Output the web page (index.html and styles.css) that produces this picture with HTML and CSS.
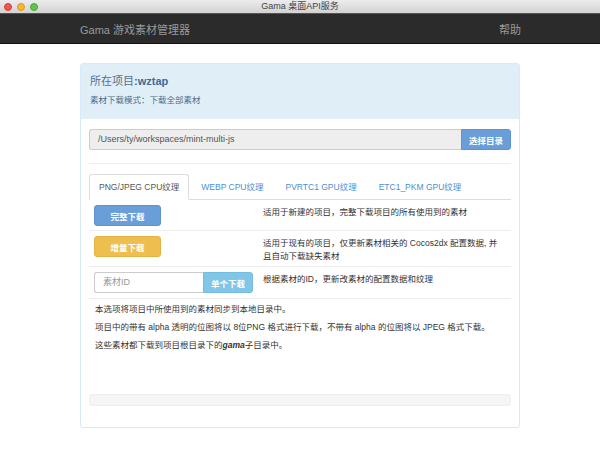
FILE: index.html
```html
<!DOCTYPE html>
<html lang="zh">
<head>
<meta charset="utf-8">
<title>Gama 桌面API服务</title>
<link rel="stylesheet" href="styles.css">
</head>
<body>
<header class="titlebar">
  <div class="lights">
    <span class="light red"></span>
    <span class="light yellow"></span>
    <span class="light green"></span>
  </div>
  <div class="wtitle">Gama 桌面API服务</div>
  <div></div>
</header>
<nav class="navbar">
  <span class="brand">Gama 游戏素材管理器</span>
  <span class="help">帮助</span>
</nav>
<main class="container">
  <section class="panel">
    <div class="panel-heading">
      <h3>所在项目<b>:wztap</b></h3>
      <p>素材下载模式：下载全部素材</p>
    </div>
    <div class="panel-body">
      <div class="input-group">
        <div class="path">/Users/ty/workspaces/mint-multi-js</div>
        <button class="btn btn-primary btn-dir">选择目录</button>
      </div>
      <hr class="sep">
      <ul class="tabs">
        <li class="tab active">PNG/JPEG CPU纹理</li>
        <li class="tab">WEBP CPU纹理</li>
        <li class="tab">PVRTC1 GPU纹理</li>
        <li class="tab">ETC1_PKM GPU纹理</li>
      </ul>
      <table class="table">
        <tr>
          <td class="act"><button class="btn btn-primary btn-wide">完整下载</button></td>
          <td class="desc">适用于新建的项目，完整下载项目的所有使用到的素材</td>
        </tr>
        <tr class="row-two">
          <td class="act"><button class="btn btn-warning btn-wide">增量下载</button></td>
          <td class="desc">适用于现有的项目，仅更新素材相关的 Cocos2dx 配置数据, 并且自动下载缺失素材</td>
        </tr>
        <tr class="row-three">
          <td class="act">
            <div class="id-group">
              <div class="id-input">素材ID</div>
              <button class="btn btn-info btn-single">单个下载</button>
            </div>
          </td>
          <td class="desc">根据素材的ID，更新改素材的配置数据和纹理</td>
        </tr>
      </table>
      <div class="notes">
        <p>本选项将项目中所使用到的素材同步到本地目录中。</p>
        <p>项目中的带有 alpha 透明的位图将以 8位PNG 格式进行下载，不带有 alpha 的位图将以 JPEG 格式下载。</p>
        <p>这些素材都下载到项目根目录下的<b><i>gama</i></b>子目录中。</p>
      </div>
      <div class="well"></div>
    </div>
  </section>
</main>
</body>
</html>
```

FILE: styles.css
```css
* { box-sizing: border-box; }
html, body {
  margin: 0;
  padding: 0;
  background: #fff;
  font-family: "Liberation Sans", "Noto Sans CJK SC", sans-serif;
}
.titlebar {
  height: 14px;
  display: grid;
  grid-template-columns: 1fr auto 1fr;
  align-items: center;
  background: linear-gradient(#ececec, #d3d3d3);
  border-bottom: 1px solid #555;
}
.lights {
  display: flex;
  gap: 5px;
  padding-left: 4px;
  align-items: center;
}
.light {
  width: 8px;
  height: 8px;
  border-radius: 50%;
  display: block;
}
.red { background: #f2544f; border: 1px solid #d6403b; }
.yellow { background: #f7b731; border: 1px solid #d99a1f; }
.green { background: #5fc450; border: 1px solid #43a838; }
.wtitle {
  font-size: 9px;
  color: #444;
  line-height: 13px;
}
.navbar {
  height: 30px;
  background: #2b2b2b;
  border-bottom: 1px solid #111;
  display: flex;
  justify-content: space-between;
  align-items: center;
  padding: 0 79px 0 80px;
  color: #9a9a9a;
  font-size: 11px;
}
.container {
  padding: 19px 80px 0;
}
.panel {
  border: 1px solid #d7eaf5;
  border-radius: 3px;
  background: #fff;
}
.panel-heading {
  background: #e0eef8;
  padding: 10px 9px 12px;
  height: 55px;
}
.panel-heading h3 {
  margin: 0;
  font-size: 11px;
  line-height: 14px;
  font-weight: normal;
  color: #56708a;
}
.panel-heading h3 b { color: #3d6a97; }
.panel-heading p {
  margin: 6px 0 0;
  font-size: 8.5px;
  line-height: 12px;
  color: #4f6c86;
}
.panel-body {
  padding: 10px 8px 21px;
}
.input-group {
  display: flex;
  height: 21px;
}
.path {
  flex: 1;
  background: #eee;
  border: 1px solid #ccc;
  border-right: none;
  border-radius: 3px 0 0 3px;
  font-size: 9px;
  color: #555;
  line-height: 19px;
  padding-left: 8px;
}
.btn {
  font-family: inherit;
  font-size: 8.5px;
  font-weight: bold;
  color: #fff;
  border: 1px solid transparent;
  border-radius: 3px;
  padding: 0;
  height: 21px;
}
.btn-primary { background: #6a9ed9; border-color: #5f93cf; }
.btn-warning { background: #eebf4f; border-color: #e3b343; }
.btn-info { background: #80c6e7; border-color: #74bde0; }
.btn-dir {
  width: 50px;
  border-radius: 0 3px 3px 0;
}
.sep {
  border: 0;
  border-top: 1px solid #eee;
  margin: 13px 0 10px;
}
.tabs {
  list-style: none;
  margin: 0;
  padding: 0;
  display: flex;
  border-bottom: 1px solid #ddd;
  height: 26px;
}
.tab {
  font-size: 8.5px;
  line-height: 24px;
  padding: 0 9px;
  margin-right: 2px;
  color: #4a8fd4;
  border: 1px solid transparent;
  border-radius: 3px 3px 0 0;
}
.tab.active {
  color: #555;
  background: #fff;
  border-color: #ddd;
  border-bottom-color: #fff;
  height: 26px;
}
.table {
  width: 100%;
  border-collapse: collapse;
}
.table td {
  border-bottom: 1px solid #eee;
  vertical-align: top;
  padding: 5px 5px 4px;
  font-size: 8.5px;
  color: #333;
}
.table td.act { width: 169px; }
.table td.desc {
  line-height: 13px;
  padding-top: 6px;
  padding-right: 10px;
}
.row-two td.desc { padding-bottom: 3px; }
.row-three td { padding-bottom: 5px; }
.btn-wide { width: 67px; display: block; }
.id-group { display: flex; height: 21px; }
.id-input {
  width: 109px;
  border: 1px solid #ccc;
  border-right: none;
  border-radius: 3px 0 0 3px;
  font-size: 9px;
  color: #999;
  line-height: 19px;
  padding-left: 8px;
}
.btn-single {
  width: 50px;
  border-radius: 0 3px 3px 0;
}
.notes { padding: 1px 5px 0 6px; }
.notes p {
  margin: 0;
  font-size: 8.5px;
  line-height: 18px;
  color: #333;
}
.notes b { font-weight: bold; }
.well {
  margin-top: 40px;
  height: 12px;
  background: #f5f5f5;
  border: 1px solid #eee;
  border-radius: 3px;
}
```
